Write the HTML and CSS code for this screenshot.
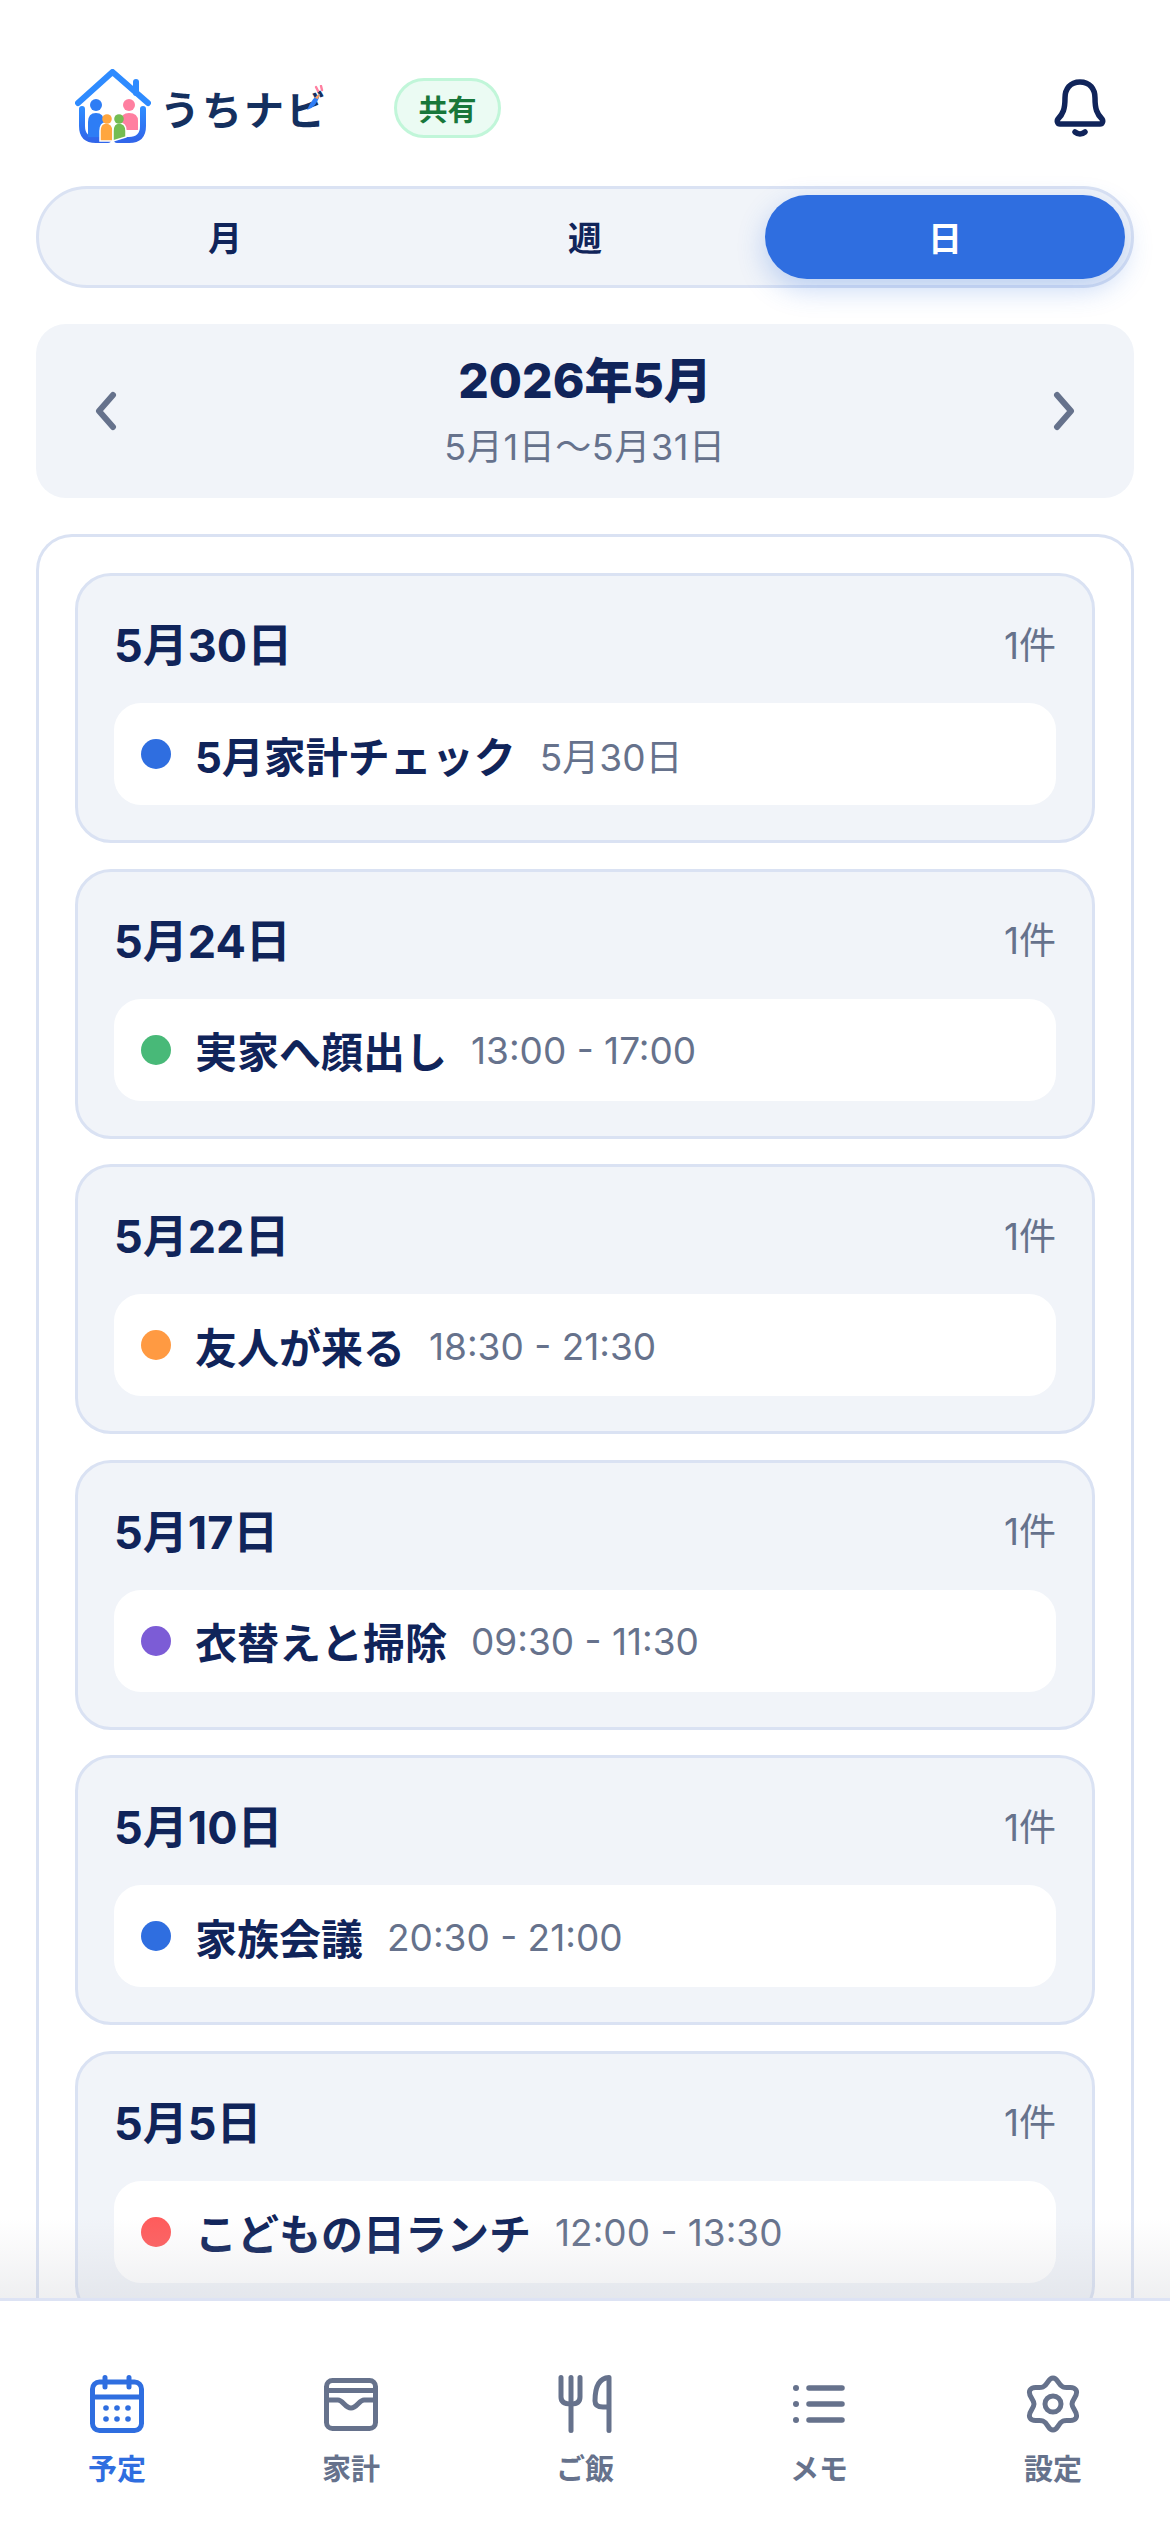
FILE: index.html
```html
<!DOCTYPE html>
<html lang="ja">
<head>
  <meta charset="UTF-8" />
  <meta name="viewport" content="width=device-width, initial-scale=1.0"/>
  <title>うちナビ</title>
  <link rel="stylesheet" href="styles.css">
</head>
<body>
  <div class="app">
    <header class="header">
      <div class="logo">
        <svg class="logo-mark" viewBox="0 0 76 74" width="76" height="74">
          <defs>
            <linearGradient id="wall" x1="0" y1="0" x2="0" y2="1">
              <stop offset="0" stop-color="#2e8bff"/>
              <stop offset="1" stop-color="#3166ea"/>
            </linearGradient>
          </defs>
          <path d="M3 34 L37.500 3 L73 34" fill="none" stroke="#2e8bff" stroke-width="6" stroke-linecap="round" stroke-linejoin="round"/>
          <path d="M61 13 V24" fill="none" stroke="#2e8bff" stroke-width="6" stroke-linecap="round"/>
          <path d="M7 40 V57 Q7 71 21 71 H33 M68 40 V57 Q68 71 54 71 H42" fill="none" stroke="url(#wall)" stroke-width="6" stroke-linecap="round"/>
          <circle cx="21" cy="36" r="6" fill="#2e7df5"/>
          <path d="M13 68 V53 Q13 44 21 44 Q29 44 29 53 V68 Z" fill="#2e7df5"/>
          <circle cx="54" cy="36" r="6" fill="#ff7fa0"/>
          <path d="M46 61 V52 Q46 44 54 44 Q63 44 63 52 V61 Z" fill="#ff7fa0"/>
          <path d="M25 72 V62 Q25 54 31 54 Q38 54 38 62 V72 Z" fill="#ffa63e" stroke="#fff" stroke-width="1.500"/>
          <circle cx="32" cy="50" r="4.800" fill="#ffa63e"/>
          <path d="M38 72 V62 Q38 54 44 54 Q51 54 51 62 V68 Z" fill="#74bd52" stroke="#fff" stroke-width="1.500"/>
          <circle cx="44" cy="50" r="4.800" fill="#74bd52"/>
        </svg>
        <span class="logo-text">うちナビ</span>
        <svg class="logo-feather" viewBox="0 0 18 26" width="18" height="26">
          <path d="M10 2 L12 6" stroke="#ff7fa0" stroke-width="2.400" stroke-linecap="round"/>
          <path d="M15 1 L16 5" stroke="#ff7fa0" stroke-width="2.400" stroke-linecap="round"/>
          <path d="M14 9 Q7 11 1 25 Q11 22 14 9 Z" fill="#2e7df5"/>
          <path d="M14 9 Q11 10 9 13 L12 14 Z" fill="#ffa05c"/>
        </svg>
      </div>
      <span class="badge">共有</span>
      <svg class="bell" viewBox="0 0 52 58" width="52" height="58" fill="none" stroke="#10245a" stroke-width="5.500" stroke-linecap="round" stroke-linejoin="round">
        <path d="M26 3 C16 3 11 10 11 19 C11 30 9 35 4 40 C2.500 42 3.500 45 6 45 H46 C48.500 45 49.500 42 48 40 C43 35 41 30 41 19 C41 10 36 3 26 3 Z"/>
        <path d="M21 53 Q26 57 31 53"/>
      </svg>
    </header>

    <div class="tabs">
      <button class="tab">月</button>
      <button class="tab">週</button>
      <button class="tab active">日</button>
    </div>

    <section class="period">
      <svg class="chev" viewBox="0 0 24 40" width="24" height="40"><path d="M19 4 L5 20 L19 36"/></svg>
      <div class="period-text">
        <h1>2026年5月</h1>
        <p>5月1日〜5月31日</p>
      </div>
      <svg class="chev" viewBox="0 0 24 40" width="24" height="40"><path d="M5 4 L19 20 L5 36"/></svg>
    </section>

    <main class="list">
      <article class="day">
        <div class="day-head"><h2>5月30日</h2><span>1件</span></div>
        <div class="event"><i class="dot blue"></i><b>5月家計チェック</b><time>5月30日</time></div>
      </article>
      <article class="day">
        <div class="day-head"><h2>5月24日</h2><span>1件</span></div>
        <div class="event"><i class="dot green"></i><b>実家へ顔出し</b><time>13:00 - 17:00</time></div>
      </article>
      <article class="day">
        <div class="day-head"><h2>5月22日</h2><span>1件</span></div>
        <div class="event"><i class="dot orange"></i><b>友人が来る</b><time>18:30 - 21:30</time></div>
      </article>
      <article class="day">
        <div class="day-head"><h2>5月17日</h2><span>1件</span></div>
        <div class="event"><i class="dot purple"></i><b>衣替えと掃除</b><time>09:30 - 11:30</time></div>
      </article>
      <article class="day">
        <div class="day-head"><h2>5月10日</h2><span>1件</span></div>
        <div class="event"><i class="dot blue"></i><b>家族会議</b><time>20:30 - 21:00</time></div>
      </article>
      <article class="day">
        <div class="day-head"><h2>5月5日</h2><span>1件</span></div>
        <div class="event"><i class="dot red"></i><b>こどもの日ランチ</b><time>12:00 - 13:30</time></div>
      </article>
      <div class="fade"></div>
    </main>

    <nav class="nav">
      <a class="nav-item current">
        <svg viewBox="0 0 54 58" width="54" height="58" fill="none" stroke="currentColor" stroke-width="5" stroke-linecap="round">
          <rect x="2.500" y="7" width="49" height="48.500" rx="7"/>
          <path d="M2.500 22 H51.500"/>
          <path d="M15 2.500 V12 M39 2.500 V12"/>
          <g fill="currentColor" stroke="none">
            <circle cx="16" cy="33" r="2.800"/><circle cx="27" cy="33" r="2.800"/><circle cx="38" cy="33" r="2.800"/>
            <circle cx="16" cy="44" r="2.800"/><circle cx="27" cy="44" r="2.800"/><circle cx="38" cy="44" r="2.800"/>
          </g>
        </svg>
        <span>予定</span>
      </a>
      <a class="nav-item">
        <svg viewBox="0 0 54 58" width="54" height="58" fill="none" stroke="currentColor" stroke-width="5" stroke-linecap="round" stroke-linejoin="round">
          <rect x="2.500" y="5.500" width="49" height="48" rx="6"/>
          <path d="M2.500 15.500 H51.500"/>
          <path d="M2.500 25 H14 C19 25 21 33 27 33 C33 33 35 25 40 25 H51.500"/>
        </svg>
        <span>家計</span>
      </a>
      <a class="nav-item">
        <svg viewBox="0 0 54 58" width="54" height="58" fill="none" stroke="currentColor" stroke-width="5" stroke-linecap="round" stroke-linejoin="round">
          <path d="M3 2.500 V22 Q3 29 13 29 Q22 29 22 22 V2.500"/>
          <path d="M13 2.500 V55.500"/>
          <path d="M51 55.500 V2.500 C42 3 37 11 37 26 Q37 32 45 32 H51"/>
        </svg>
        <span>ご飯</span>
      </a>
      <a class="nav-item">
        <svg viewBox="0 0 54 58" width="54" height="58" fill="none" stroke="currentColor" stroke-width="5.500" stroke-linecap="round">
          <path d="M17 13 H50 M17 29 H50 M17 45 H50"/>
          <g fill="currentColor" stroke="none">
            <circle cx="4" cy="13" r="3"/><circle cx="4" cy="29" r="3"/><circle cx="4" cy="45" r="3"/>
          </g>
        </svg>
        <span>メモ</span>
      </a>
      <a class="nav-item">
        <svg viewBox="0 0 54 58" width="54" height="58" fill="none" stroke="currentColor" stroke-width="5" stroke-linejoin="round">
          <path d="M27 3 C32 3 32 10 37 12 C42 14 47 10 50 15 C53 20 46 24 46 29 C46 34 53 38 50 43 C47 48 42 44 37 46 C32 48 32 55 27 55 C22 55 22 48 17 46 C12 44 7 48 4 43 C1 38 8 34 8 29 C8 24 1 20 4 15 C7 10 12 14 17 12 C22 10 22 3 27 3 Z"/>
          <circle cx="27" cy="29" r="8"/>
        </svg>
        <span>設定</span>
      </a>
    </nav>
  </div>
</body>
</html>
```

FILE: styles.css
```css
* {
  box-sizing: border-box;
}

html, body {
  margin: 0;
  height: 100%;
}

body {
  background: #fff;
  font-family: Inter, "Noto Sans CJK JP", sans-serif;
  color: #10245a;
}

.app {
  display: flex;
  flex-direction: column;
  height: 2532px;
  overflow: hidden;
}

.header {
  display: flex;
  align-items: center;
  height: 186px;
  padding: 30px 64px 0 75px;
  flex-shrink: 0;
}

.logo {
  position: relative;
  display: flex;
  align-items: center;
  width: 319px;
  margin-top: -5px;
}

.logo-text {
  margin: 5px 0 0 9px;
  font-family: "Noto Sans CJK JP", sans-serif;
  font-size: 40px;
  font-weight: 700;
  letter-spacing: 2px;
  color: #14305f;
  white-space: nowrap;
}

.logo-feather {
  position: absolute;
  left: 231px;
  top: 16px;
}

.badge {
  display: flex;
  align-items: center;
  justify-content: center;
  width: 107px;
  height: 60px;
  border: 3px solid #c1f6d9;
  border-radius: 30px;
  background: #ebfbf3;
  color: #18773a;
  font-size: 29px;
  font-weight: 700;
}

.bell {
  margin-left: auto;
}

.tabs {
  display: flex;
  flex-shrink: 0;
  height: 102px;
  margin: 0 36px;
  padding: 6px;
  background: #f1f4f9;
  border: 3px solid #dae2f3;
  border-radius: 51px;
}

.tab {
  flex: 1;
  border: none;
  padding: 0 0 2px;
  background: none;
  border-radius: 42px;
  color: #10245a;
  font-family: inherit;
  font-size: 34px;
  font-weight: 700;
}

.tab.active {
  background: #2f6ee0;
  color: #fff;
  box-shadow: 0 10px 28px rgba(47, 110, 224, 0.28);
}

.period {
  display: flex;
  align-items: center;
  justify-content: space-between;
  flex-shrink: 0;
  height: 174px;
  margin: 36px 36px 0;
  padding: 0 58px;
  background: #f1f4f9;
  border-radius: 30px;
}

.chev {
  fill: none;
  stroke: #66728c;
  stroke-width: 6;
  stroke-linecap: round;
  stroke-linejoin: round;
}

.period-text {
  text-align: center;
}

.period-text h1 {
  margin: -2px 0 0;
  font-size: 48px;
  line-height: 58px;
  font-weight: 800;
}

.period-text p {
  margin: 15px 0 0;
  font-size: 36px;
  line-height: 44px;
  letter-spacing: 0.6px;
  color: #66728c;
}

.list {
  position: relative;
  flex: 1;
  min-height: 0;
  display: flex;
  flex-direction: column;
  gap: 25.5px;
  margin: 36px 36px 0;
  padding: 36px 36px 0;
  background: #fff;
  border: 3px solid #dae2f3;
  border-bottom: none;
  border-radius: 36px 36px 0 0;
}

.day {
  flex-shrink: 0;
  height: 270px;
  padding: 0 36px;
  background: #f1f4f9;
  border: 3px solid #dae2f3;
  border-radius: 36px;
}

.day-head {
  display: flex;
  align-items: center;
  justify-content: space-between;
  height: 127px;
  padding: 12px 0 6px;
}

.day-head h2 {
  margin: 0;
  font-size: 45px;
  font-weight: 700;
}

.day-head span {
  font-size: 37px;
  color: #66728c;
}

.event {
  display: flex;
  align-items: center;
  height: 102px;
  padding: 0 27px;
  background: #fff;
  border-radius: 27px;
}

.dot {
  width: 30px;
  height: 30px;
  border-radius: 50%;
  margin-right: 24px;
}

.blue { background: #2f6ee0; }
.green { background: #48b978; }
.orange { background: #ff9a42; }
.purple { background: #7c5cd6; }
.red { background: #ff5c5c; }

.event b {
  font-size: 42px;
  font-weight: 700;
}

.event time {
  margin: 2px 0 0 24px;
  font-size: 37px;
  color: #66728c;
}

.fade {
  position: absolute;
  left: -39px;
  right: -39px;
  bottom: 0;
  height: 80px;
  background: linear-gradient(rgba(190, 192, 200, 0), rgba(190, 192, 200, 0.25));
}

.nav {
  position: relative;
  display: grid;
  grid-template-columns: repeat(5, 1fr);
  flex-shrink: 0;
  height: 234px;
  padding-top: 74px;
  background: #fff;
  border-top: 3px solid #dde3f4;
}

.nav-item {
  display: flex;
  flex-direction: column;
  align-items: center;
  color: #66728c;
  font-size: 29px;
  font-weight: 700;
}

.nav-item span {
  margin-top: 13px;
}

.nav-item.current {
  color: #2f6ee0;
}
```
